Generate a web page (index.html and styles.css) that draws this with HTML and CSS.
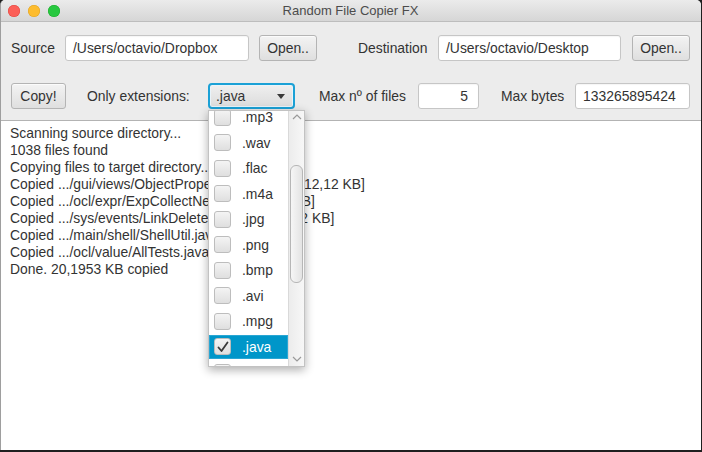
FILE: index.html
```html
<!DOCTYPE html>
<html>
<head>
<meta charset="utf-8">
<title>Random File Copier FX</title>
<link rel="stylesheet" href="styles.css">
</head>
<body>
<div class="window">
  <div class="titlebar">
    <div class="lights">
      <span class="light red"></span>
      <span class="light yellow"></span>
      <span class="light green"></span>
    </div>
    <div class="title">Random File Copier FX</div>
    <div class="title-spacer"></div>
  </div>

  <div class="form">
    <div class="row">
      <span class="lbl lbl-source">Source</span>
      <div class="field field-src">/Users/octavio/Dropbox</div>
      <div class="btn btn-open1">Open..</div>
      <span class="lbl lbl-dest">Destination</span>
      <div class="field field-dst">/Users/octavio/Desktop</div>
      <div class="btn btn-open2">Open..</div>
    </div>
    <div class="row row2">
      <div class="btn btn-copy">Copy!</div>
      <span class="lbl lbl-ext">Only extensions:</span>
      <div class="combo"><span class="combo-text">.java</span><span class="combo-arrow"></span></div>
      <span class="lbl lbl-max">Max nº of files</span>
      <div class="field field-max">5</div>
      <span class="lbl lbl-bytes">Max bytes</span>
      <div class="field field-bytes">133265895424</div>
    </div>
  </div>

  <div class="log">
    <div>Scanning source directory...</div>
    <div>1038 files found</div>
    <div>Copying files to target directory...</div>
    <div>Copied .../gui/views/ObjectPropertiesView.java [12,12 KB]</div>
    <div>Copied .../ocl/expr/ExpCollectNested.java [31 KB]</div>
    <div>Copied .../sys/events/LinkDeletedEvent.java [1,2 KB]</div>
    <div>Copied .../main/shell/ShellUtil.java [4,5 KB]</div>
    <div>Copied .../ocl/value/AllTests.java [2 KB]</div>
    <div>Done. 20,1953 KB copied</div>
  </div>

  <div class="popup">
    <div class="list">
      <div class="list-inner">
        <div class="item"><span class="check"></span><span class="item-text">.mp3</span></div>
        <div class="item"><span class="check"></span><span class="item-text">.wav</span></div>
        <div class="item"><span class="check"></span><span class="item-text">.flac</span></div>
        <div class="item"><span class="check"></span><span class="item-text">.m4a</span></div>
        <div class="item"><span class="check"></span><span class="item-text">.jpg</span></div>
        <div class="item"><span class="check"></span><span class="item-text">.png</span></div>
        <div class="item"><span class="check"></span><span class="item-text">.bmp</span></div>
        <div class="item"><span class="check"></span><span class="item-text">.avi</span></div>
        <div class="item"><span class="check"></span><span class="item-text">.mpg</span></div>
        <div class="item selected"><span class="check checked"><svg width="14" height="14" viewBox="0 0 14 14"><path d="M2.5 7.5 L5.5 11 L11.5 2.5" fill="none" stroke="#3a3a3a" stroke-width="1.8" stroke-linecap="round" stroke-linejoin="round"/></svg></span><span class="item-text">.java</span></div>
        <div class="item"><span class="check"></span><span class="item-text">.mov</span></div>
      </div>
    </div>
    <div class="sb">
      <div class="sb-up"><svg width="10" height="6" viewBox="0 0 10 6"><path d="M1 5 L5 1 L9 5" fill="none" stroke="#9a9a9a" stroke-width="1.2"/></svg></div>
      <div class="sb-track"><div class="sb-thumb"></div></div>
      <div class="sb-down"><svg width="10" height="6" viewBox="0 0 10 6"><path d="M1 1 L5 5 L9 1" fill="none" stroke="#9a9a9a" stroke-width="1.2"/></svg></div>
    </div>
  </div>
</div>
</body>
</html>
```

FILE: styles.css
```css
* {
  box-sizing: border-box;
}

html, body {
  margin: 0;
  padding: 0;
  width: 702px;
  height: 452px;
  overflow: hidden;
  background: #1f1f1f;
}

body {
  font-family: "Liberation Sans", Arial, sans-serif;
  font-size: 13.9px;
  color: #333333;
}

.window {
  position: relative;
  width: 701px;
  height: 450px;
  background: #ececec;
  border-radius: 5px 5px 0 0;
  overflow: hidden;
  display: flex;
  flex-direction: column;
  border-left: 1px solid #9e9e9e;
}

/* Title bar */
.titlebar {
  height: 22px;
  flex: none;
  display: grid;
  grid-template-columns: 1fr auto 1fr;
  align-items: center;
  background: linear-gradient(#ebebeb, #d6d6d6);
  border-bottom: 1px solid #bdbdbd;
}

.lights {
  display: flex;
  gap: 8px;
  padding-left: 7px;
}

.light {
  width: 12px;
  height: 12px;
  border-radius: 50%;
  display: block;
}

.red { background: #fc5f57; box-shadow: inset 0 0 0 0.5px #e0443e; }
.yellow { background: #fdbc2e; box-shadow: inset 0 0 0 0.5px #dea123; }
.green { background: #28c840; box-shadow: inset 0 0 0 0.5px #1aab29; }

.title {
  font-size: 13px;
  color: #4c4c4c;
  margin-left: -1px;
}

/* Form */
.form {
  padding: 13px 0 0 9px;
  flex: none;
}

.row {
  display: flex;
  align-items: center;
  height: 26px;
}

.row2 {
  margin-top: 22px;
}

.lbl {
  flex: none;
  white-space: nowrap;
}

.field {
  flex: none;
  height: 26px;
  line-height: 24px;
  background: #ffffff;
  border: 1px solid #c6c6c6;
  border-radius: 3px;
  padding: 0 7px;
  white-space: nowrap;
  overflow: hidden;
  box-shadow: inset 0 1px 1px rgba(0,0,0,0.04);
}

.btn {
  flex: none;
  height: 26px;
  line-height: 24px;
  text-align: center;
  border: 1px solid #b4b4b4;
  border-radius: 3px;
  background: linear-gradient(#f3f3f3, #dfdfdf);
  box-shadow: inset 0 1px 0 #fbfbfb;
}

.lbl-source { width: 55px; padding-left: 1px; }
.field-src { width: 184px; }
.btn-open1 { width: 58px; margin-left: 10px; }
.lbl-dest { width: 80px; margin-left: 41px; }
.field-dst { width: 183px; }
.btn-open2 { width: 58px; margin-left: 11px; }

.btn-copy { width: 55px; margin-left: 1px; }
.lbl-ext { width: 121px; margin-left: 21px; }
.combo {
  flex: none;
  width: 87px;
  height: 26px;
  display: flex;
  align-items: center;
  justify-content: space-between;
  border: 2px solid #1ba1d6;
  border-radius: 4px;
  background: linear-gradient(#efefef, #dcdcdc);
  box-shadow: inset 0 0 0 1px #e9f4fa;
  padding: 0 8px 0 6px;
}
.combo-arrow {
  width: 0;
  height: 0;
  border-left: 4.5px solid transparent;
  border-right: 4.5px solid transparent;
  border-top: 5px solid #3a3a3a;
}
.lbl-max { width: 99px; margin-left: 24px; }
.field-max { width: 61px; text-align: right; padding-right: 10px; }
.lbl-bytes { width: 74px; margin-left: 22px; }
.field-bytes { width: 115px; }

/* Log text area */
.log {
  flex: 1;
  margin-top: 11px;
  background: #ffffff;
  border-top: 1px solid #b3b3b3;
  padding: 4px 9px;
  line-height: 17px;
  white-space: nowrap;
  overflow: hidden;
}

/* Popup list */
.popup {
  position: absolute;
  left: 207px;
  top: 110px;
  width: 97px;
  height: 257px;
  background: #ffffff;
  border: 1px solid #c2c2c2;
  box-shadow: 0 3px 9px rgba(0,0,0,0.32);
  display: flex;
  z-index: 2;
}

.list {
  flex: 1;
  overflow: hidden;
}

.list-inner {
  margin-top: -6.5px;
}

.item {
  height: 25.5px;
  display: flex;
  align-items: center;
  padding-left: 5px;
  border-top: 1px solid transparent;
  border-bottom: 1px solid transparent;
  background-clip: padding-box;
}

.item.selected {
  background-color: #0096c9;
  color: #ffffff;
  box-shadow: inset 0 0 0 1px #2aa6d3;
}

.check {
  flex: none;
  width: 17px;
  height: 17px;
  border: 1px solid #bdbdbd;
  border-radius: 3px;
  background: linear-gradient(#f4f4f4, #dfdfdf);
  display: flex;
  align-items: center;
  justify-content: center;
}

.item-text {
  margin-left: 11px;
}

.sb {
  flex: none;
  width: 16px;
  border-left: 1px solid #d9d9d9;
  background: linear-gradient(to right, #ececec, #f7f7f7);
  display: flex;
  flex-direction: column;
}

.sb-up, .sb-down {
  flex: none;
  height: 12px;
  display: flex;
  justify-content: center;
  align-items: center;
}

.sb-track {
  flex: 1;
  padding-top: 42px;
  padding-left: 1px;
}

.sb-thumb {
  width: 13px;
  height: 118px;
  border: 1px solid #b6b6b6;
  border-radius: 6px;
  background: linear-gradient(to right, #f6f6f6, #e3e3e3);
}

.sb-down {
  height: 14px;
}
```
